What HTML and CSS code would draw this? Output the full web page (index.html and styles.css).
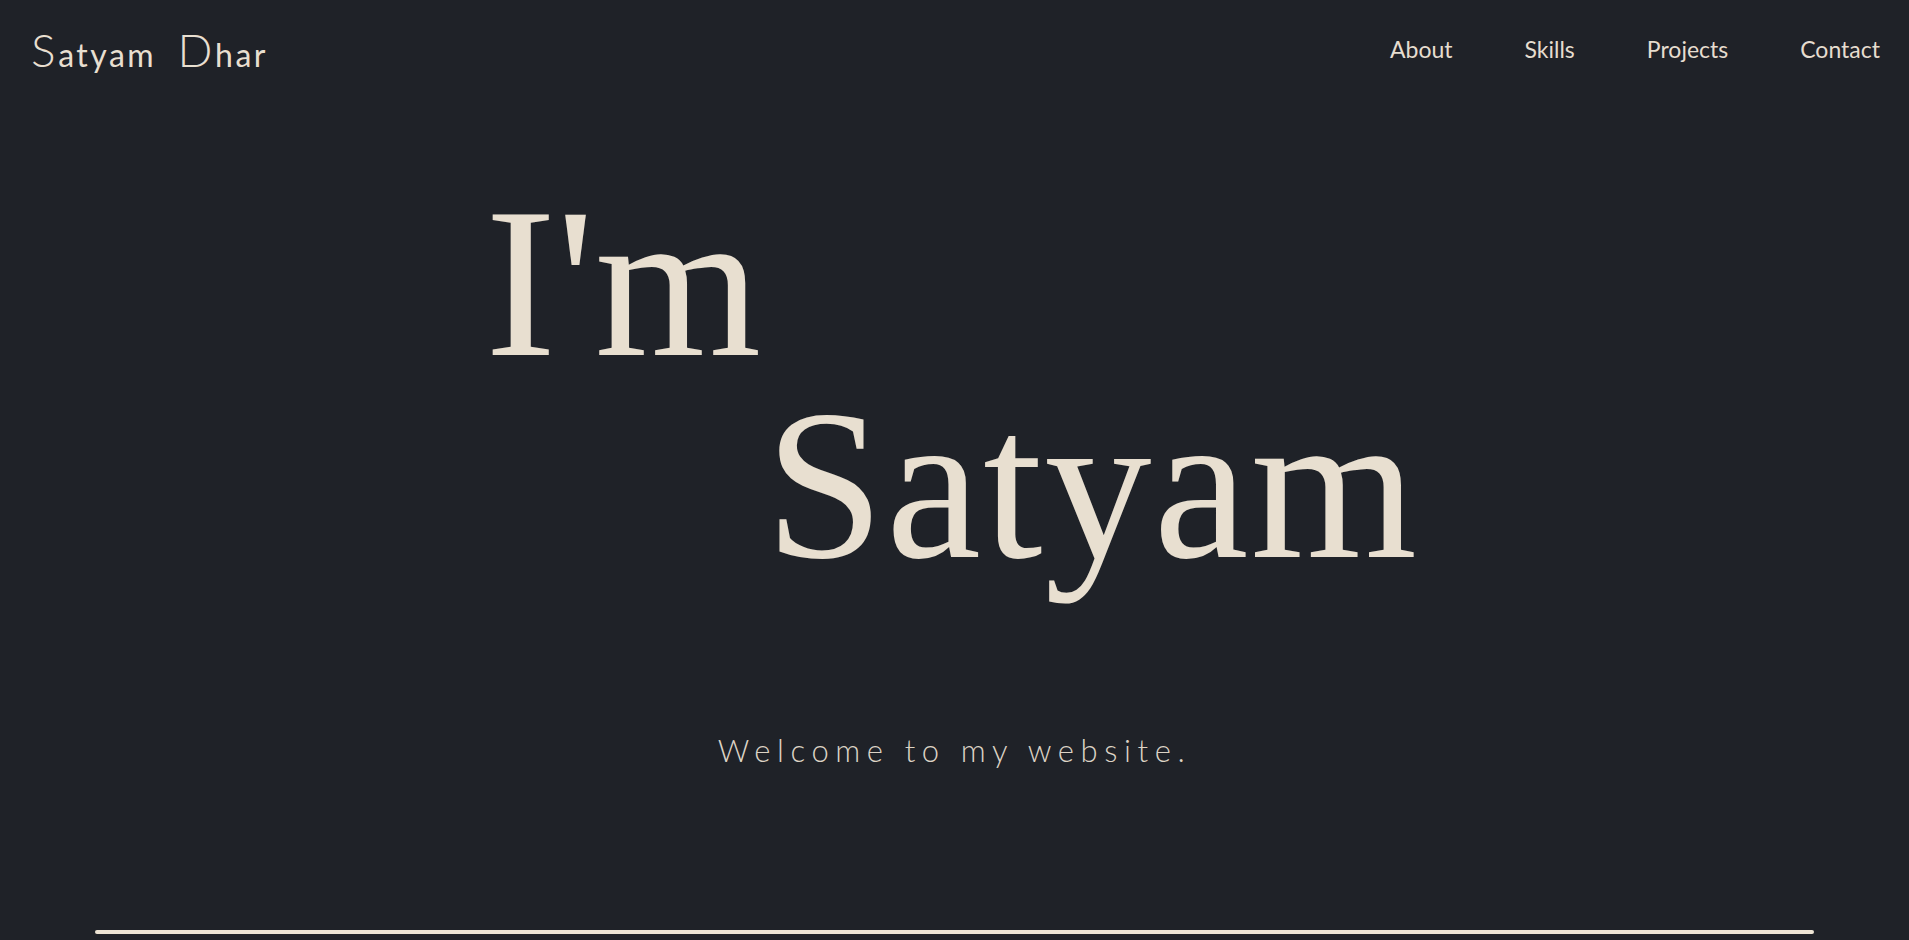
FILE: index.html
```html
<!DOCTYPE html>
<html lang="en">
<head>
<meta charset="utf-8">
<title>Satyam Dhar</title>
<link rel="stylesheet" href="styles.css">
</head>
<body>
<header class="header">
  <a class="logo" href="#"><span class="cap">S</span>atyam&nbsp; <span class="cap">D</span>har</a>
  <nav class="nav">
    <a href="#about">About</a>
    <a href="#skills">Skills</a>
    <a href="#projects">Projects</a>
    <a href="#contact">Contact</a>
  </nav>
</header>
<main class="hero">
  <h1 class="title">
    <span class="line line-one">I'm</span>
    <span class="line line-two">Satyam</span>
  </h1>
  <p class="welcome">Welcome to my website.</p>
  <div class="rule"></div>
</main>
</body>
</html>
```

FILE: styles.css
```css
* { box-sizing: border-box; }
html, body { margin: 0; padding: 0; }
body {
  background: #1f2228;
  color: #e8dfd0;
  width: 1909px;
  height: 940px;
  overflow: hidden;
  font-family: "Lato", "Liberation Sans", sans-serif;
}
a { color: inherit; text-decoration: none; }

.header {
  display: flex;
  justify-content: space-between;
  align-items: center;
  height: 98px;
  padding: 0 29px 0 31px;
}
.logo {
  font-family: "Lato", sans-serif;
  font-size: 32px;
  letter-spacing: 2.5px;
  color: #e8dfd0;
  line-height: 1;
  margin-top: 2px;
}
.logo .cap {
  font-size: 46px;
  font-weight: 300;
}
.nav {
  display: flex;
  gap: 72px;
  font-size: 23px;
  color: #e6ddcf;
}

.hero { display: flex; flex-direction: column; }
.title {
  margin: 0;
  font-family: "Liberation Serif", serif;
  font-weight: 400;
  font-size: 214px;
  line-height: 202px;
  color: #e8dfd0;
  display: flex;
  flex-direction: column;
  margin-top: 84px;
}
.line { display: block; }
.line-one { padding-left: 485px; }
.line-two { padding-left: 765px; letter-spacing: 2px; }

.welcome {
  margin: 144px 0 0;
  text-align: center;
  font-family: "Lato", sans-serif;
  font-weight: 300;
  font-size: 31px;
  letter-spacing: 6.6px;
  color: #dcd3c5;
  line-height: 40px;
}

.rule {
  width: 90%;
  height: 4px;
  margin: 160px auto 0;
  background: #ede4d4;
  border-radius: 2px;
}
```
